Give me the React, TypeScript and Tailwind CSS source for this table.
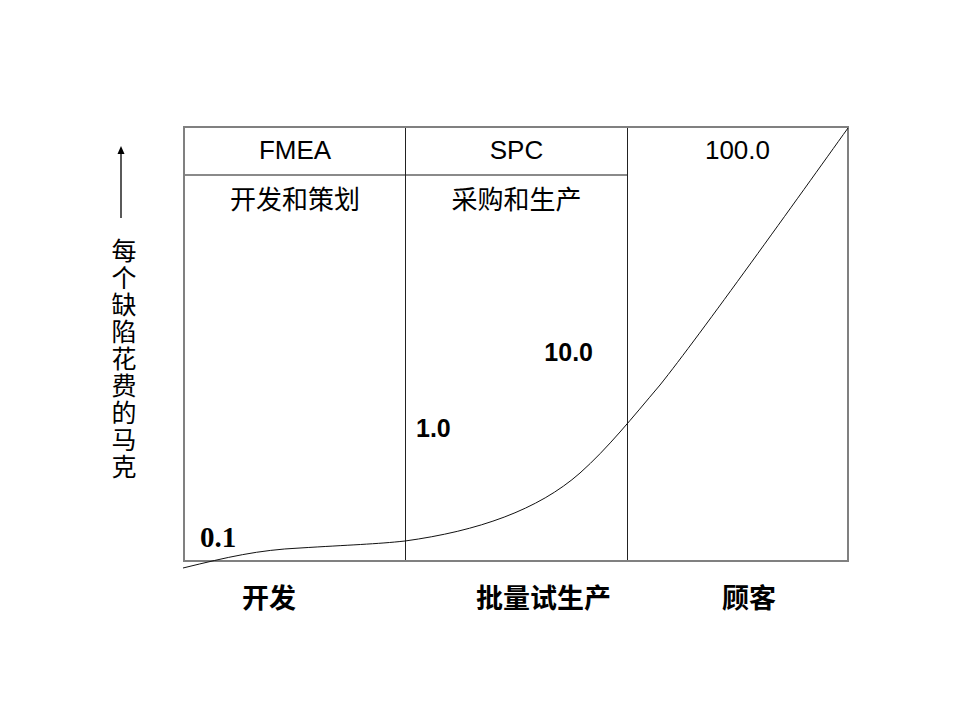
const sans = "font-['Liberation_Sans','Arial',sans-serif]";
const cjk = "font-['Noto_Sans_CJK_SC',sans-serif]";

function CostCurve() {
  return (
    <svg
      className="pointer-events-none absolute inset-0"
      width="960"
      height="720"
      viewBox="0 0 960 720"
    >
      <path
        d="M183 568 C 228 557, 258 550, 300 548 C 348 545, 378 544, 405 541 C 478 531, 538 510, 580 473 C 608 448, 632 418, 660 385 C 700 335, 800 195, 848 128"
        fill="none"
        stroke="#111"
        strokeWidth="1"
      />
    </svg>
  );
}

function UpArrow() {
  return (
    <svg width="26" height="72" viewBox="0 0 26 72">
      <line x1="10" y1="6" x2="10" y2="72" stroke="#000" strokeWidth="1.3" />
      <path d="M10 0 L13.5 8 L6.5 8 Z" fill="#000" />
    </svg>
  );
}

export default function App() {
  return (
    <div className="relative h-[720px] w-[960px] overflow-hidden bg-white text-black">
      <div className="flex pt-[126px]">
        <div className="w-[183px] shrink-0">
          <div className="ml-[111px] flex w-[26px] flex-col items-center pt-[20px]">
            <UpArrow />
            <p
              className={`mt-[20px] text-[25px] leading-[26px] tracking-[2px] [writing-mode:vertical-rl] ${cjk}`}
            >
              每个缺陷花费的马克
            </p>
          </div>
        </div>

        <div>
          <div className="flex h-[436px] w-[666px] border-2 border-[#808080]">
            <div className="flex w-[221px] flex-col border-r border-[#222]">
              <div className={`flex h-[48px] items-center justify-center border-b-2 border-[#8a8a8a] pb-[1px] text-[26px] ${sans}`}>
                FMEA
              </div>
              <div className="flex flex-1 flex-col justify-between">
                <p className={`pt-[7px] text-center text-[26px] leading-[30px] ${cjk}`}>开发和策划</p>
                <p className="mb-[7px] ml-[15px] font-['Liberation_Serif','Times_New_Roman',serif] text-[29px] font-bold leading-[32px]">
                  0.1
                </p>
              </div>
            </div>

            <div className="flex w-[222px] flex-col border-r border-[#222]">
              <div className={`flex h-[48px] items-center justify-center border-b-2 border-[#8a8a8a] pb-[1px] text-[26px] ${sans}`}>
                SPC
              </div>
              <div className="flex flex-1 flex-col">
                <p className={`pt-[7px] text-center text-[26px] leading-[30px] ${cjk}`}>采购和生产</p>
                <p className={`mt-[124px] mr-[34px] text-right text-[25px] font-bold leading-[30px] ${sans}`}>10.0</p>
                <p className={`mt-[46px] ml-[10px] text-[25px] font-bold leading-[30px] ${sans}`}>1.0</p>
              </div>
            </div>

            <div className="flex flex-1 flex-col">
              <div className={`flex h-[48px] items-center justify-center pb-[4px] text-[26px] ${sans}`}>
                100.0
              </div>
            </div>
          </div>

          <div className={`mt-[19px] flex text-[27px] font-bold leading-[32px] ${cjk}`}>
            <span className="ml-[59px]">开发</span>
            <span className="ml-[180px]">批量试生产</span>
            <span className="ml-[111px]">顾客</span>
          </div>
        </div>
      </div>

      <CostCurve />
    </div>
  );
}
